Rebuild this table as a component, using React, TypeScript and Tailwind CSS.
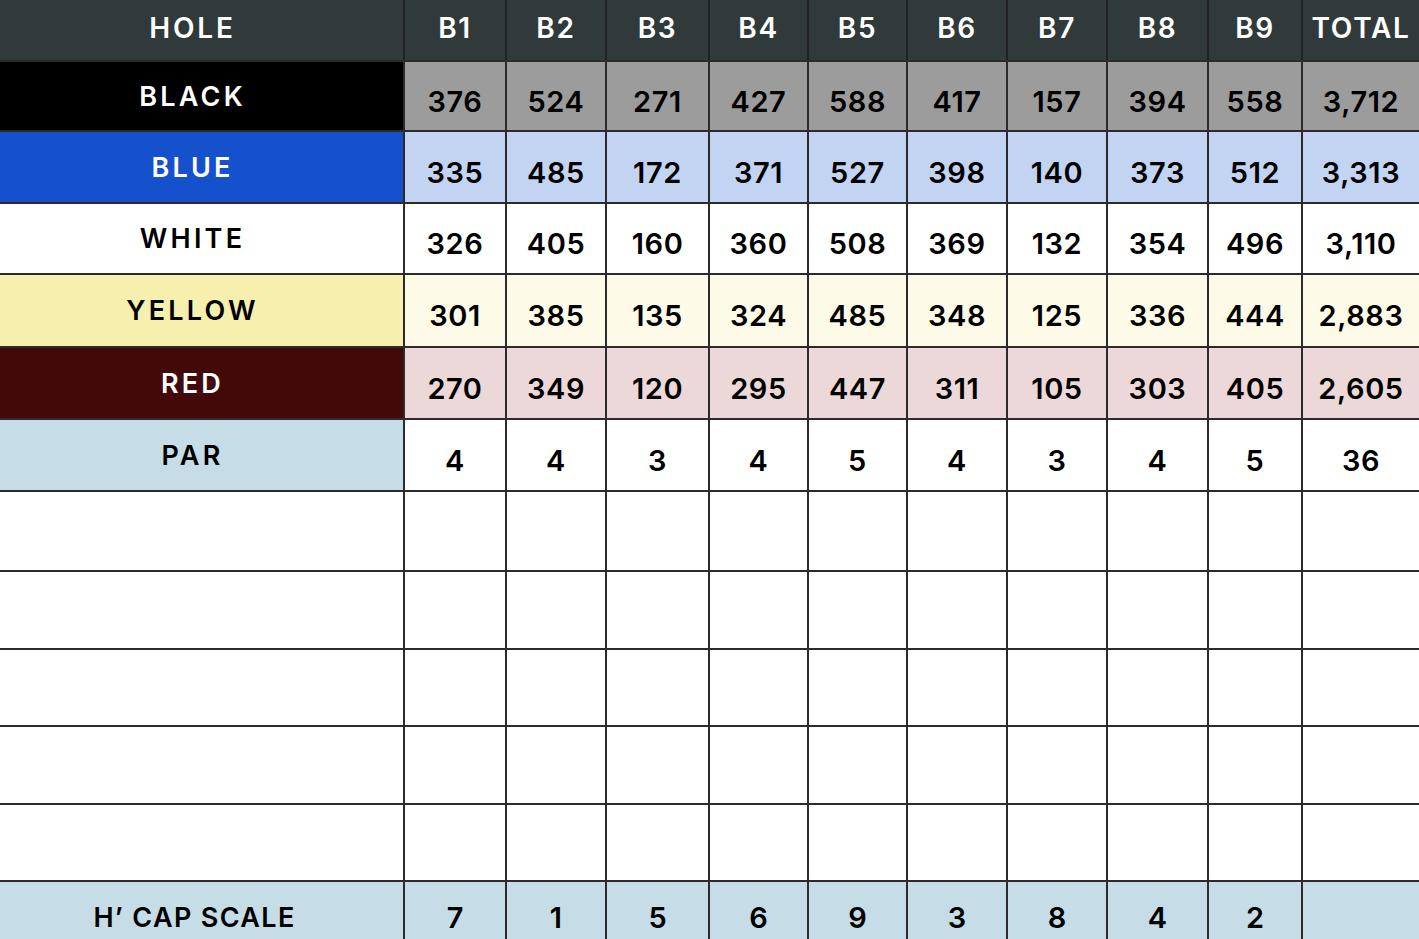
import React from 'react';

type Row = {
  label: string;
  labelCls: string;
  cellCls: string;
  values: string[];
  h: string;
};

const cols = ['B1', 'B2', 'B3', 'B4', 'B5', 'B6', 'B7', 'B8', 'B9', 'TOTAL'];

const rows: Row[] = [
  {
    label: 'BLACK',
    labelCls: 'bg-black text-white',
    cellCls: 'bg-[#9c9c9c]',
    values: ['376', '524', '271', '427', '588', '417', '157', '394', '558', '3,712'],
    h: 'h-[70px]',
  },
  {
    label: 'BLUE',
    labelCls: 'bg-[#1551cc] text-white',
    cellCls: 'bg-[#c3d4f3]',
    values: ['335', '485', '172', '371', '527', '398', '140', '373', '512', '3,313'],
    h: 'h-[72px]',
  },
  {
    label: 'WHITE',
    labelCls: 'bg-white text-black',
    cellCls: 'bg-white',
    values: ['326', '405', '160', '360', '508', '369', '132', '354', '496', '3,110'],
    h: 'h-[71px]',
  },
  {
    label: 'YELLOW',
    labelCls: 'bg-[#f7efad] text-black',
    cellCls: 'bg-[#fdfbe7]',
    values: ['301', '385', '135', '324', '485', '348', '125', '336', '444', '2,883'],
    h: 'h-[73px]',
  },
  {
    label: 'RED',
    labelCls: 'bg-[#430909] text-white',
    cellCls: 'bg-[#ecd8d8]',
    values: ['270', '349', '120', '295', '447', '311', '105', '303', '405', '2,605'],
    h: 'h-[72px]',
  },
  {
    label: 'PAR',
    labelCls: 'bg-[#c6dde8] text-black',
    cellCls: 'bg-white',
    values: ['4', '4', '3', '4', '5', '4', '3', '4', '5', '36'],
    h: 'h-[72px]',
  },
];

const blankHeights = ['h-[80px]', 'h-[78px]', 'h-[77px]', 'h-[78px]', 'h-[77px]'];

const grid =
  'grid grid-cols-[405px_102px_100px_103px_99px_99px_100px_100px_101px_94px_1fr]';

function Line({ h, children }: { h: string; children: React.ReactNode }) {
  return <div className={`${grid} ${h} border-b-2 border-[#2b2b2b]`}>{children}</div>;
}

export default function App() {
  return (
    <div
      className="w-[1419px] h-[939px] overflow-hidden bg-white text-black"
      style={{ fontFamily: 'Inter, "Liberation Sans", sans-serif' }}
    >
      {/* header */}
      <Line h="h-[62px]">
        <div className="bg-[#303a3a] text-white flex items-center justify-center text-[28px] font-semibold tracking-[0.1em] border-r-2 border-[#222] pb-[4px] pr-[18px]">
          HOLE
        </div>
        {cols.map((c, i) => (
          <div
            key={c}
            className={`bg-[#303a3a] text-white flex items-center justify-center text-[28px] font-semibold tracking-[0.06em] pb-[4px] ${
              i < cols.length - 1 ? 'border-r-2 border-[#222]' : ''
            }`}
          >
            {c}
          </div>
        ))}
      </Line>

      {rows.map(r => (
        <Line key={r.label} h={r.h}>
          <div
            className={`${r.labelCls} flex items-center justify-center text-[27px] font-semibold tracking-[0.12em] border-r-2 border-[#2b2b2b] pt-[2px] pr-[18px]`}
          >
            {r.label}
          </div>
          {r.values.map((v, i) => (
            <div
              key={i}
              className={`${r.cellCls} flex items-center justify-center text-[29px] font-semibold tracking-[0.02em] pt-[11px] ${
                i < r.values.length - 1 ? 'border-r-2 border-[#2b2b2b]' : ''
              }`}
            >
              {v}
            </div>
          ))}
        </Line>
      ))}

      {blankHeights.map((h, n) => (
        <Line key={n} h={h}>
          <div className="border-r-2 border-[#2b2b2b]" />
          {cols.map((c, i) => (
            <div key={c} className={i < cols.length - 1 ? 'border-r-2 border-[#2b2b2b]' : ''} />
          ))}
        </Line>
      ))}

      {/* handicap */}
      <div className={`${grid} h-[80px] bg-[#c6dde8]`}>
        <div className="flex items-start justify-center pt-[16px] pr-[14px] text-[27px] font-semibold tracking-[0.05em] border-r-2 border-[#2b2b2b]">
          H’ CAP SCALE
        </div>
        {['7', '1', '5', '6', '9', '3', '8', '4', '2', ''].map((v, i) => (
          <div
            key={i}
            className={`flex items-start justify-center pt-[14px] text-[29px] font-semibold ${
              i < 9 ? 'border-r-2 border-[#2b2b2b]' : ''
            }`}
          >
            {v}
          </div>
        ))}
      </div>
    </div>
  );
}
